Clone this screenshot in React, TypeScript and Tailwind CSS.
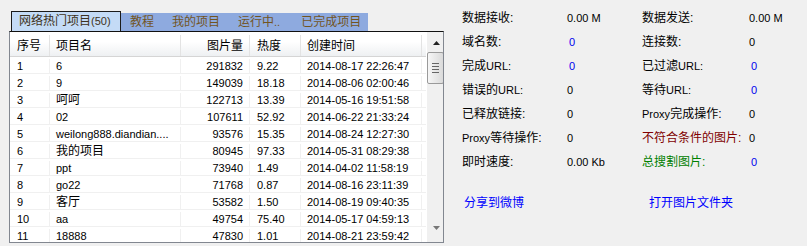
import React from "react";

// project list data
const rows = [
  { id: 1, name: "6", count: "291832", heat: "9.22", time: "2014-08-17 22:26:47" },
  { id: 2, name: "9", count: "149039", heat: "18.18", time: "2014-08-06 02:00:46" },
  { id: 3, name: "呵呵", count: "122713", heat: "13.39", time: "2014-05-16 19:51:58" },
  { id: 4, name: "02", count: "107611", heat: "52.92", time: "2014-06-22 21:33:24" },
  { id: 5, name: "weilong888.diandian....", count: "93576", heat: "15.35", time: "2014-08-24 12:27:30" },
  { id: 6, name: "我的项目", count: "80945", heat: "97.33", time: "2014-05-31 08:29:38" },
  { id: 7, name: "ppt", count: "73940", heat: "1.49", time: "2014-04-02 11:58:19" },
  { id: 8, name: "go22", count: "71768", heat: "0.87", time: "2014-08-16 23:11:39" },
  { id: 9, name: "客厅", count: "53582", heat: "1.50", time: "2014-08-19 09:40:35" },
  { id: 10, name: "aa", count: "49754", heat: "75.40", time: "2014-05-17 04:59:13" },
  { id: 11, name: "18888", count: "47830", heat: "1.01", time: "2014-08-21 23:59:42" },
];

const isCjk = (s: string) => /[\u4e00-\u9fff]/.test(s);

// latin text is set a bit smaller than the CJK glyphs, like Tahoma next to SimSun
function Lat({ children }: { children: React.ReactNode }) {
  return <span className="text-[11px]">{children}</span>;
}

function Tabs() {
  return (
    <div className="flex items-end pl-[2px]">
      <div className="h-[20px] w-[110px] border border-b-0 border-[#1b1b1b] bg-[#c4dbf6] pl-[7px] leading-[19px] text-[#3e3220]">
        网络热门项目<Lat>(50)</Lat>
      </div>
      <div className="flex h-[18px] items-center bg-[#8eaadf] leading-[18px] text-[#72551f]">
        <span className="px-[9px]">教程</span>
        <span className="px-[9px]">我的项目</span>
        <span className="px-[9px]">
          运行中<Lat>..</Lat>
        </span>
        <span className="pl-[12px] pr-[7px]">已完成项目</span>
      </div>
    </div>
  );
}

function Scrollbar() {
  return (
    <div className="flex w-[17px] shrink-0 flex-col bg-[#f0f0f0]">
      <div className="flex h-[20px] items-center justify-center pl-[2px] pt-[1px]">
        <svg width="7" height="4" viewBox="0 0 7 4">
          <path d="M3.5 0L7 4H0z" fill="#222" />
        </svg>
      </div>
      <div className="flex h-[32px] flex-col items-center justify-center gap-[2px] rounded-[2px] border border-[#9a9a9a] bg-gradient-to-r from-[#f6f6f6] to-[#dadada]">
        <div className="h-px w-[7px] bg-[#666]" />
        <div className="h-px w-[7px] bg-[#666]" />
        <div className="h-px w-[7px] bg-[#666]" />
        <div className="h-px w-[7px] bg-[#666]" />
      </div>
      <div className="flex-1" />
      <div className="flex h-[16px] items-start justify-center pl-[2px] pt-[0px]">
        <svg width="7" height="4" viewBox="0 0 7 4">
          <path d="M0 0H7L3.5 4z" fill="#777" />
        </svg>
      </div>
    </div>
  );
}

function ProjectTable() {
  return (
    <div className="flex h-[212px] w-[435px] overflow-hidden border border-t-[#111] border-x-[#828790] border-b-[#828790] bg-white">
      <div className="flex w-[416px] shrink-0 flex-col">
        {/* Header */}
        <div className="flex h-[25px] shrink-0 border-b border-[#d5d5d5] bg-gradient-to-b from-white from-40% to-[#eef0f2] pt-[3px] leading-[22px]">
          <div className="w-[40px] border-r border-[#e3e3e3] pl-[7px]">序号</div>
          <div className="w-[131px] border-r border-[#e3e3e3] pl-[6px]">项目名</div>
          <div className="w-[69px] border-r border-[#e3e3e3] pr-[6px] text-right">图片量</div>
          <div className="w-[51px] border-r border-[#e3e3e3] pl-[7px]">热度</div>
          <div className="w-[121px] border-r border-[#e3e3e3] pl-[6px]">创建时间</div>
        </div>

        {/* Rows */}
        {rows.map((r) => (
          <div key={r.id} className="flex h-[17px] shrink-0 border-b border-[#f0f0f0] pt-[2px] text-[11px] leading-[15px]">
            <div className="w-[40px] border-r border-[#f0f0f0] pl-[7px]">{r.id}</div>
            <div className={isCjk(r.name) ? "w-[131px] border-r border-[#f0f0f0] pl-[6px] text-[12px]" : "w-[131px] border-r border-[#f0f0f0] pl-[6px]"}>
              {r.name}
            </div>
            <div className="w-[69px] border-r border-[#f0f0f0] pr-[6px] text-right">{r.count}</div>
            <div className="w-[51px] border-r border-[#f0f0f0] pl-[7px]">{r.heat}</div>
            <div className="w-[121px] border-r border-[#f0f0f0] pl-[6px]">{r.time}</div>
          </div>
        ))}
      </div>
      <div className="w-[1px] shrink-0" />
      <Scrollbar />
    </div>
  );
}

type Stat = { label: React.ReactNode; value: React.ReactNode; labelClass?: string; valueClass?: string };

const stats: [Stat, Stat][] = [
  [
    { label: "数据接收:", value: <Lat>0.00 M</Lat> },
    { label: "数据发送:", value: <Lat>0.00 M</Lat> },
  ],
  [
    { label: "域名数:", value: <Lat>0</Lat>, valueClass: "pl-[2px] text-[#0000ee]" },
    { label: "连接数:", value: <Lat>0</Lat> },
  ],
  [
    { label: <>完成<Lat>URL:</Lat></>, value: <Lat>0</Lat>, valueClass: "pl-[2px] text-[#0000ee]" },
    { label: <>已过滤<Lat>URL:</Lat></>, value: <Lat>0</Lat>, valueClass: "pl-[2px] text-[#0000ee]" },
  ],
  [
    { label: <>错误的<Lat>URL:</Lat></>, value: <Lat>0</Lat> },
    { label: <>等待<Lat>URL:</Lat></>, value: <Lat>0</Lat>, valueClass: "pl-[2px] text-[#0000ee]" },
  ],
  [
    { label: "已释放链接:", value: <Lat>0</Lat> },
    { label: <><Lat>Proxy</Lat>完成操作:</>, value: <Lat>0</Lat> },
  ],
  [
    { label: <><Lat>Proxy</Lat>等待操作:</>, value: <Lat>0</Lat> },
    { label: "不符合条件的图片:", value: <Lat>0</Lat>, labelClass: "text-[#800000]" },
  ],
  [
    { label: "即时速度:", value: <Lat>0.00 Kb</Lat> },
    { label: "总搜割图片:", value: <Lat>0</Lat>, labelClass: "text-[#008000]", valueClass: "pl-[2px] text-[#0000ee]" },
  ],
];

function StatsPanel() {
  return (
    <div className="flex flex-col pl-[18px] pt-[6px]">
      <div className="grid grid-cols-[105px_75px_107px_60px]">
        {stats.map(([a, b], i) => (
          <React.Fragment key={i}>
            <div className={"flex h-[24px] items-center " + (a.labelClass ?? "")}>{a.label}</div>
            <div className={"flex h-[24px] items-center " + (a.valueClass ?? "")}>{a.value}</div>
            <div className={"flex h-[24px] items-center " + (b.labelClass ?? "")}>{b.label}</div>
            <div className={"flex h-[24px] items-center " + (b.valueClass ?? "")}>{b.value}</div>
          </React.Fragment>
        ))}
      </div>
      <div className="mt-[17px] flex h-[24px] items-center pl-[2px] text-[#0000ff]">
        <span className="w-[185px] cursor-pointer">分享到微博</span>
        <span className="cursor-pointer">打开图片文件夹</span>
      </div>
    </div>
  );
}

export default function App() {
  return (
    <div className="flex h-[246px] w-[807px] overflow-hidden bg-[#f0f0f0] font-['Liberation_Sans','Noto_Sans_CJK_SC',sans-serif] text-[12px] text-black">
      <div className="flex w-[444px] shrink-0 flex-col pl-[9px] pt-[11px]">
        <Tabs />
        <ProjectTable />
      </div>
      <StatsPanel />
    </div>
  );
}
